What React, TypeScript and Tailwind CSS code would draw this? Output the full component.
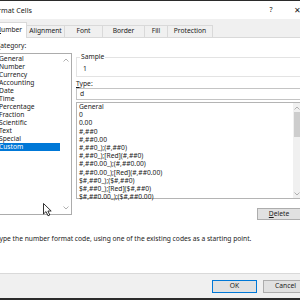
import React from 'react';

const categories = ['General', 'Number', 'Currency', 'Accounting', 'Date', 'Time', 'Percentage', 'Fraction', 'Scientific', 'Text', 'Special', 'Custom'];

const formats = [
  'General',
  '0',
  '0.00',
  '#,##0',
  '#,##0.00',
  '#,##0_);(#,##0)',
  '#,##0_);[Red](#,##0)',
  '#,##0.00_);(#,##0.00)',
  '#,##0.00_);[Red](#,##0.00)',
  '$#,##0_);($#,##0)',
  '$#,##0_);[Red]($#,##0)',
  '$#,##0.00_);($#,##0.00)',
];

const tabs = [
  { label: 'Number', w: 'w-[36px]', active: true },
  { label: 'Alignment', w: 'w-[38px]' },
  { label: 'Font', w: 'w-[38px]' },
  { label: 'Border', w: 'w-[42px]' },
  { label: 'Fill', w: 'w-[23px]' },
  { label: 'Protection', w: 'w-[45px]' },
];

function Chevron({ up }: { up?: boolean }) {
  return (
    <svg width="6" height="4" viewBox="0 0 6 4" className="text-[#a8a8a8]">
      <path d={up ? 'M0.5 3.5 L3 1 L5.5 3.5' : 'M0.5 0.5 L3 3 L5.5 0.5'} fill="none" stroke="currentColor" strokeWidth="0.9" />
    </svg>
  );
}

function Cursor() {
  return (
    <svg width="10" height="14" viewBox="0 0 10 14" className="absolute left-[43px] top-[203px]">
      <path d="M0.5 0.5 L0.5 11 L3 8.6 L5 12.8 L6.8 12 L4.9 8 L8.2 8 Z" fill="#fff" stroke="#000" strokeWidth="0.8" strokeLinejoin="round" />
    </svg>
  );
}

export default function App() {
  return (
    <div className="relative w-[300px] h-[300px] overflow-hidden bg-[#f0f0f0] text-[6.7px] text-[#1a1a1a] font-['Noto_Sans',sans-serif]">
      <div className="ml-[-12px] w-[322px] h-full flex flex-col">
        {/* title bar */}
        <div className="h-[19px] border-t border-[#2b2b2b] bg-white flex items-center">
          <span className="pl-[2px] text-[7.2px]">Format Cells</span>
          <span className="ml-auto w-[26px] text-center text-[7px]">?</span>
          <span className="w-[26px] text-center text-[8px]">✕</span>
        </div>

        {/* tabs */}
        <div className="h-[18px] pl-[3px] flex items-end">
          {tabs.map((t) =>
            t.active ? (
              <div key={t.label} className={`${t.w} relative z-10 h-[16px] mb-[-1px] bg-white border border-b-0 border-[#d9d9d9] flex items-center justify-center`}>
                <span><u>N</u>umber</span>
              </div>
            ) : (
              <div key={t.label} className={`${t.w} h-[12px] border border-b-0 border-l-0 border-[#d9d9d9] bg-[#f0f0f0] flex items-center justify-center`}>
                {t.label}
              </div>
            )
          )}
        </div>

        {/* tab page */}
        <div className="mx-[3px] h-[237px] bg-white border border-[#d9d9d9] pl-[4px] pr-[5px] pt-[4px]">
          <div className="flex gap-[4px]">
            {/* category */}
            <div className="w-[76px]">
              <div className="h-[8px] leading-[8px]"><u>C</u>ategory:</div>
              <div className="mt-[3px] h-[162px] border border-[#acacac] flex">
                <div className="flex-1 pt-[1px]">
                  {categories.map((c) => (
                    <div key={c} className={`h-[8px] leading-[8px] pl-[2px] ${c === 'Custom' ? 'bg-[#0078d7] text-white' : ''}`}>{c}</div>
                  ))}
                </div>
                <div className="w-[11px] flex flex-col items-center justify-between py-[4px]">
                  <Chevron up />
                  <Chevron />
                </div>
              </div>
            </div>

            {/* right column */}
            <div className="flex-1 flex flex-col">
              <div className="relative mt-[15px] h-[20px] border border-[#e3e3e3] pl-[6px] pt-[7px]">
                <span className="absolute left-[3px] top-[-5px] bg-white px-[1px] leading-[8px]">Sample</span>
                <div className="h-[8px] leading-[8px]">1</div>
              </div>
              <div className="mt-[3px] h-[8px] leading-[8px]"><u>T</u>ype:</div>
              <div className="h-[12px] border border-[#c4c4c4] pl-[3px] leading-[10px]">d</div>
              <div className="mt-[2px] h-[97px] border border-[#b4b4b4] flex">
                <div className="flex-1 pl-[2px]">
                  {formats.map((f) => (
                    <div key={f} className="h-[8.2px] leading-[8.2px] whitespace-nowrap">{f}</div>
                  ))}
                </div>
                <div className="w-[7px] flex flex-col items-center bg-[#f0f0f0]">
                  <div className="h-[9px] flex items-center"><Chevron up /></div>
                  <div className="w-[6px] h-[25px] bg-[#cdcdcd]" />
                  <div className="mt-auto h-[9px] flex items-center"><Chevron /></div>
                </div>
              </div>
              <div className="mt-[9px] self-end w-[44px] h-[12px] border border-[#adadad] bg-[#e1e1e1] flex items-center justify-center">
                <span><u>D</u>elete</span>
              </div>
            </div>
          </div>
          <div className="mt-[15px] h-[8px] leading-[8px] whitespace-nowrap">Type the number format code, using one of the existing codes as a starting point.</div>
        </div>

        {/* footer */}
        <div className="mt-[6px] pr-[2px] flex justify-end gap-[6px]">
          <div className="w-[45px] h-[13px] border border-[#0078d7] bg-[#e1e1e1] flex items-center justify-center">OK</div>
          <div className="w-[45px] h-[13px] border border-[#adadad] bg-[#e1e1e1] flex items-center justify-center">Cancel</div>
        </div>
        <div className="mt-auto h-[2px] bg-[#2b2b2b]" />
      </div>
      <Cursor />
    </div>
  );
}
